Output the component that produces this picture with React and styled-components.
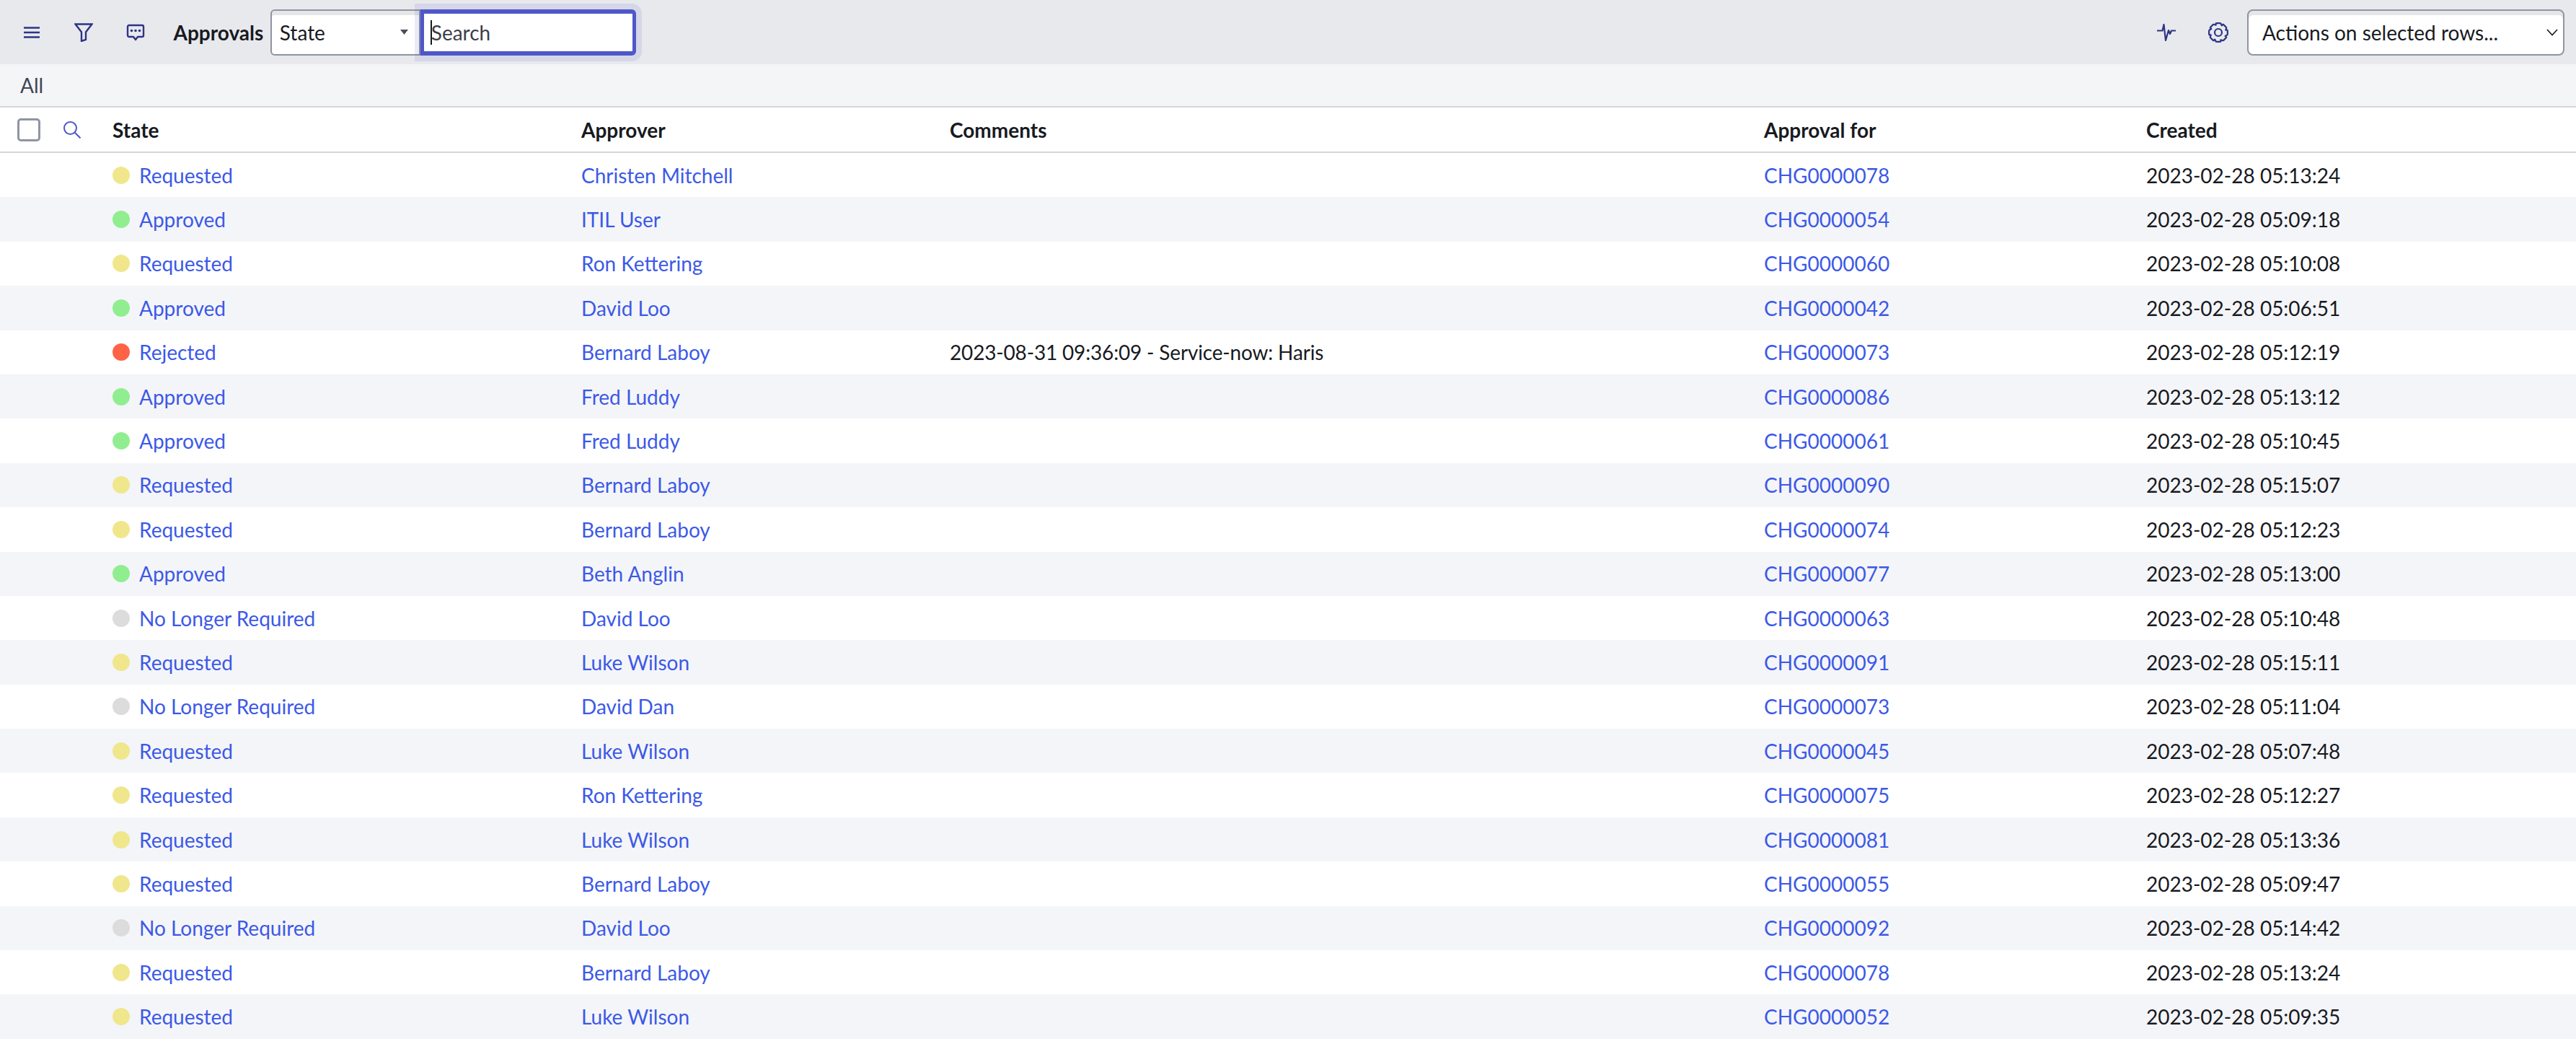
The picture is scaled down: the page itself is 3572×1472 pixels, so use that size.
import React from 'react';
import styled, { createGlobalStyle } from 'styled-components';

const GlobalStyle = createGlobalStyle`
  html, body { margin: 0; padding: 0; background: #fff; }
  body { font-family: Lato, "Liberation Sans", sans-serif; color: #181a1f; }
`;

const columns = '156px 650px 511px 1129px 530px 1fr';

const Toolbar = styled.header`
  display: flex;
  align-items: center;
  height: 89px;
  padding: 0 16px 0 33px;
  background: #e7e9ed;
  box-sizing: border-box;
`;

const IconSlot = styled.span`
  display: flex;
  align-items: center;
  justify-content: center;
  color: #2e3484;
  margin-right: ${(p) => p.$gap || 0}px;
`;

const Title = styled.h1`
  margin: 0 9.5px 0 0;
  font-size: 28px;
  font-weight: 700;
`;

const SelectBox = styled.div`
  display: flex;
  align-items: center;
  justify-content: space-between;
  box-sizing: border-box;
  height: 64px;
  width: ${(p) => p.$width}px;
  padding: 0 ${(p) => p.$padRight}px 0 ${(p) => p.$padLeft}px;
  font-size: 28px;
  background: #fff;
  border: 2px solid #8f95a1;
  border-radius: ${(p) => p.$radius};
  box-shadow: inset 0 6px 0 #e4e6e8;
`;

const SearchBox = styled.div`
  position: relative;
  display: flex;
  align-items: center;
  box-sizing: border-box;
  height: 64px;
  width: 299px;
  padding-left: 10px;
  font-size: 28px;
  color: #3b3f4a;
  background: #fff;
  border-style: solid;
  border-color: #4f57c9;
  border-width: 6px 5px;
  border-radius: 0 6px 6px 0;
  box-shadow: 0 0 0 8px rgba(79, 87, 201, 0.12);
`;

const Caret = styled.i`
  position: absolute;
  left: 9px;
  top: 9px;
  width: 2px;
  height: 34px;
  background: #181a1f;
`;

const Spacer = styled.div`
  flex: 1;
`;

const Breadcrumb = styled.div`
  display: flex;
  align-items: center;
  box-sizing: border-box;
  height: 60px;
  padding-left: 28px;
  font-size: 28px;
  color: #3f4452;
  background: #f4f5f7;
  border-bottom: 2px solid #d5d6dc;
`;

const HeaderRow = styled.div`
  display: grid;
  grid-template-columns: ${columns};
  align-items: center;
  box-sizing: border-box;
  height: 63px;
  font-size: 28px;
  font-weight: 700;
  border-bottom: 2px solid #d5d6dc;
`;

const HeaderTools = styled.div`
  display: flex;
  align-items: center;
  padding-left: 24px;
  gap: 32px;
`;

const Checkbox = styled.span`
  display: block;
  box-sizing: border-box;
  width: 32px;
  height: 32px;
  background: #fff;
  border: 3px solid #8f95a1;
  border-radius: 5px;
`;

const Row = styled.div`
  display: grid;
  grid-template-columns: ${columns};
  align-items: center;
  height: 61.4px;
  font-size: 28px;
  background: ${(p) => (p.$striped ? '#f4f5f8' : '#fff')};
`;

const Link = styled.a`
  color: #3c59e7;
  text-decoration: none;
`;

const StateCell = styled.div`
  display: flex;
  align-items: center;
  gap: 13px;
  grid-column: 2;
`;

const CommentCell = styled.div`
  letter-spacing: -0.17px;
`;

const Dot = styled.span`
  width: 24px;
  height: 24px;
  border-radius: 50%;
  background: ${(p) => p.$color};
`;

const dots = {
  Requested: '#f0e68c',
  Approved: '#90ee90',
  Rejected: '#ff6347',
  'No Longer Required': '#dcdcdc',
};

const rows = [
  ['Requested', 'Christen Mitchell', '', 'CHG0000078', '2023-02-28 05:13:24'],
  ['Approved', 'ITIL User', '', 'CHG0000054', '2023-02-28 05:09:18'],
  ['Requested', 'Ron Kettering', '', 'CHG0000060', '2023-02-28 05:10:08'],
  ['Approved', 'David Loo', '', 'CHG0000042', '2023-02-28 05:06:51'],
  ['Rejected', 'Bernard Laboy', '2023-08-31 09:36:09 - Service-now: Haris', 'CHG0000073', '2023-02-28 05:12:19'],
  ['Approved', 'Fred Luddy', '', 'CHG0000086', '2023-02-28 05:13:12'],
  ['Approved', 'Fred Luddy', '', 'CHG0000061', '2023-02-28 05:10:45'],
  ['Requested', 'Bernard Laboy', '', 'CHG0000090', '2023-02-28 05:15:07'],
  ['Requested', 'Bernard Laboy', '', 'CHG0000074', '2023-02-28 05:12:23'],
  ['Approved', 'Beth Anglin', '', 'CHG0000077', '2023-02-28 05:13:00'],
  ['No Longer Required', 'David Loo', '', 'CHG0000063', '2023-02-28 05:10:48'],
  ['Requested', 'Luke Wilson', '', 'CHG0000091', '2023-02-28 05:15:11'],
  ['No Longer Required', 'David Dan', '', 'CHG0000073', '2023-02-28 05:11:04'],
  ['Requested', 'Luke Wilson', '', 'CHG0000045', '2023-02-28 05:07:48'],
  ['Requested', 'Ron Kettering', '', 'CHG0000075', '2023-02-28 05:12:27'],
  ['Requested', 'Luke Wilson', '', 'CHG0000081', '2023-02-28 05:13:36'],
  ['Requested', 'Bernard Laboy', '', 'CHG0000055', '2023-02-28 05:09:47'],
  ['No Longer Required', 'David Loo', '', 'CHG0000092', '2023-02-28 05:14:42'],
  ['Requested', 'Bernard Laboy', '', 'CHG0000078', '2023-02-28 05:13:24'],
  ['Requested', 'Luke Wilson', '', 'CHG0000052', '2023-02-28 05:09:35'],
];

const MenuIcon = () => (
  <svg width="22" height="16" viewBox="0 0 22 16" fill="none" stroke="currentColor" strokeWidth="2.4">
    <path d="M0 1.5h22M0 8h22M0 14.5h22" />
  </svg>
);

const FilterIcon = () => (
  <svg width="26" height="26" viewBox="0 0 26 26" fill="none" stroke="currentColor" strokeWidth="2.4" strokeLinejoin="miter">
    <path d="M1.5 1.5h23L16 12.5v10.5l-6 2V12.5z" />
  </svg>
);

const ChatIcon = () => (
  <svg width="26" height="24" viewBox="0 0 26 24" fill="none">
    <path d="M4 2h18a2 2 0 0 1 2 2v12a2 2 0 0 1-2 2h-6l-3 4-3-4H4a2 2 0 0 1-2-2V4a2 2 0 0 1 2-2z" stroke="currentColor" strokeWidth="2.4" strokeLinejoin="round" />
    <circle cx="7.5" cy="9.5" r="1.8" fill="currentColor" />
    <circle cx="13" cy="9.5" r="1.8" fill="currentColor" />
    <circle cx="18.5" cy="9.5" r="1.8" fill="currentColor" />
  </svg>
);

const PulseIcon = () => (
  <svg width="26" height="24" viewBox="0 0 26 24" fill="none" stroke="currentColor" strokeWidth="2.2" strokeLinejoin="round">
    <path d="M0 9.5h7.5L9.5 1 12 23l4-14 2 5 2-4.5h6" />
  </svg>
);

// 8 rounded teeth round a ring
const gearPath = () => {
  const points = [];
  for (let i = 0; i < 8; i++) {
    const base = (i * Math.PI) / 4;
    [[-0.26, 13], [-0.14, 13], [0.14, 13], [0.26, 13], [0.47, 10.8]].forEach(([a, r]) => {
      points.push(`${(15 + r * Math.cos(base + a)).toFixed(2)} ${(15 + r * Math.sin(base + a)).toFixed(2)}`);
    });
  }
  return `M${points.join('L')}Z`;
};

const GearIcon = () => (
  <svg width="30" height="30" viewBox="0 0 30 30" fill="none" stroke="currentColor" strokeWidth="2.2" strokeLinecap="round" strokeLinejoin="round">
    <path d={gearPath()} />
    <circle cx="15" cy="15" r="5" />
  </svg>
);

const SearchIcon = () => (
  <svg width="24" height="24" viewBox="0 0 24 24" fill="none" stroke="#4f57c9" strokeWidth="2">
    <circle cx="9.5" cy="9.5" r="8.5" />
    <path d="M15.5 15.5l8 8" />
  </svg>
);

const TriangleIcon = () => (
  <svg width="11" height="7" viewBox="0 0 11 7" fill="#4a4f5c">
    <path d="M0 0h11L5.5 7z" />
  </svg>
);

const ChevronIcon = () => (
  <svg width="16" height="10" viewBox="0 0 16 10" fill="none" stroke="#181a1f" strokeWidth="1.6">
    <path d="M1 1l7 7.5L15 1" />
  </svg>
);

export default function App() {
  return (
    <>
      <GlobalStyle />
      <Toolbar>
        <IconSlot $gap={48}><MenuIcon /></IconSlot>
        <IconSlot $gap={46}><FilterIcon /></IconSlot>
        <IconSlot $gap={39.5}><ChatIcon /></IconSlot>
        <Title>Approvals</Title>
        <SelectBox $width={208} $padLeft={11} $padRight={15} $radius="6px 0 0 6px">
          State
          <TriangleIcon />
        </SelectBox>
        <SearchBox>
          <Caret />
          Search
        </SearchBox>
        <Spacer />
        <IconSlot $gap={44}><PulseIcon /></IconSlot>
        <IconSlot $gap={25}><GearIcon /></IconSlot>
        <SelectBox $width={440} $padLeft={19} $padRight={7} $radius="8px">
          Actions on selected rows...
          <ChevronIcon />
        </SelectBox>
      </Toolbar>
      <Breadcrumb>All</Breadcrumb>
      <HeaderRow>
        <HeaderTools>
          <Checkbox />
          <SearchIcon />
        </HeaderTools>
        <div>State</div>
        <div>Approver</div>
        <div>Comments</div>
        <div>Approval for</div>
        <div>Created</div>
      </HeaderRow>
      {rows.map(([state, approver, comment, ref, created], i) => (
        <Row key={i} $striped={i % 2 === 1}>
          <StateCell>
            <Dot $color={dots[state]} />
            <Link>{state}</Link>
          </StateCell>
          <Link>{approver}</Link>
          <CommentCell>{comment}</CommentCell>
          <Link>{ref}</Link>
          <div>{created}</div>
        </Row>
      ))}
    </>
  );
}
